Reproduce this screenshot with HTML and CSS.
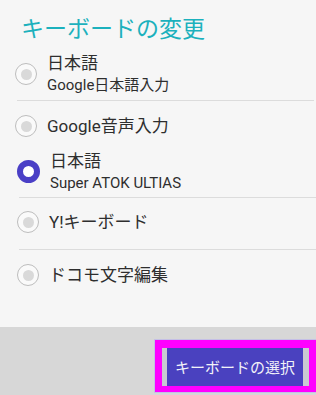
FILE: index.html
```html
<!DOCTYPE html>
<html lang="ja">
<head>
<meta charset="utf-8">
<link rel="stylesheet" href="styles.css">
</head>
<body>
<div class="dialog">
  <div class="title">キーボードの変更</div>
  <div class="item r1">
    <span class="radio"></span>
    <div class="text">
      <div class="label">日本語</div>
      <div class="sub">Google日本語入力</div>
    </div>
  </div>
  <div class="divider d1"></div>
  <div class="item r2">
    <span class="radio"></span>
    <div class="text"><div class="label">Google音声入力</div></div>
  </div>
  <div class="item r3 shift">
    <span class="radio on"></span>
    <div class="text">
      <div class="label">日本語</div>
      <div class="sub">Super ATOK ULTIAS</div>
    </div>
  </div>
  <div class="divider d2"></div>
  <div class="item r4 shift">
    <span class="radio"></span>
    <div class="text"><div class="label">Y!キーボード</div></div>
  </div>
  <div class="divider d2"></div>
  <div class="item r5 shift">
    <span class="radio"></span>
    <div class="text"><div class="label">ドコモ文字編集</div></div>
  </div>
</div>
<div class="footer">
  <div class="focus">
    <div class="btn"><span>キーボードの選択</span></div>
  </div>
</div>
</body>
</html>
```
FILE: styles.css
```css
html, body {
  margin: 0;
  padding: 0;
}
body {
  width: 316px;
  height: 395px;
  overflow: hidden;
  font-family: Roboto, "Noto Sans CJK JP", sans-serif;
  color: #2e2e2e;
  background: #d7d7d7;
}
.dialog {
  height: 327px;
  background: #f6f6f6;
  display: flex;
  flex-direction: column;
}
.title {
  height: 48px;
  box-sizing: border-box;
  padding: 12px 0 0 21px;
  font-size: 23px;
  line-height: 30px;
  color: #1cb1bd;
  font-family: "Noto Sans CJK JP", sans-serif;
}
.item {
  display: flex;
  align-items: center;
  gap: 10px;
  padding-left: 15px;
  box-sizing: border-box;
}
.item.shift {
  padding-left: 17px;
}
.r1 { height: 52px; }
.r2 { height: 50px; }
.r3 { height: 46px; padding-bottom: 5px; }
.r4 { height: 51px; padding-bottom: 3px; }
.r5 { height: 50px; }
.radio {
  flex: none;
  width: 22px;
  height: 22px;
  box-sizing: border-box;
  border-radius: 50%;
  border: 1.5px solid #bdbdbd;
  background: #fafafa;
  display: flex;
  align-items: center;
  justify-content: center;
}
.radio::after {
  content: "";
  width: 11px;
  height: 11px;
  border-radius: 50%;
  background: #d9d9d9;
}
.radio.on {
  width: 23px;
  height: 23px;
  border: 6.5px solid #4a3fc6;
  background: #ffffff;
}
.radio.on::after {
  display: none;
}
.label {
  font-size: 17px;
  line-height: 23px;
}
.sub {
  font-size: 15px;
  line-height: 21px;
}
.divider {
  height: 1px;
  background: #dcdcdc;
  flex: none;
}
.d1 { margin: 0 2px 0 17px; }
.d2 { margin: 0 0 0 19px; }
.footer {
  height: 68px;
  box-sizing: border-box;
  padding-top: 13px;
  display: flex;
  justify-content: flex-end;
}
.focus {
  width: 161px;
  height: 52px;
  box-sizing: border-box;
  border-style: solid;
  border-color: #ff00ff;
  border-width: 8px 7px 6px 7px;
  box-shadow: 0 0 0 1px #c4bfe6;
  display: flex;
}
.btn {
  flex: 1;
  background: #4a41bf;
  border-left: 5px solid #c9c9d2;
  border-right: 6px solid #c9c9d2;
  display: flex;
  align-items: center;
  justify-content: center;
  color: #f2f2f8;
  font-size: 15px;
  line-height: 20px;
  font-family: "Noto Sans CJK JP", sans-serif;
}
```
